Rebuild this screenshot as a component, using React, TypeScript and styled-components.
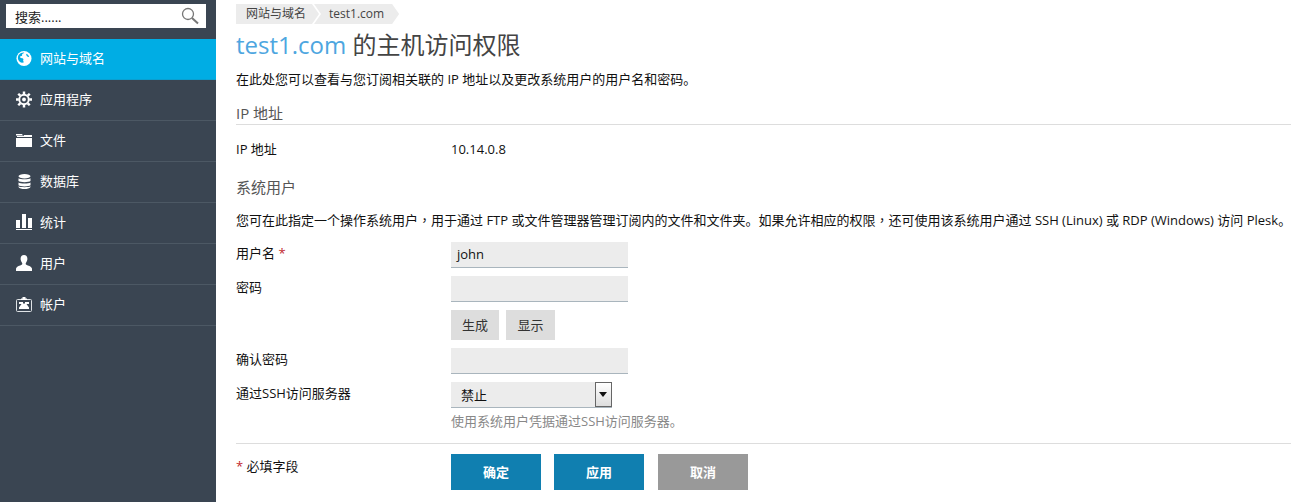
import React, { FC } from 'react';

import styled, { createGlobalStyle } from 'styled-components';

const GlobalStyle = createGlobalStyle`
  html, body {
    margin: 0;
    padding: 0;
    height: 100%;
    background: #fff;
  }
  body {
    font-family: "Open Sans", "Noto Sans CJK SC", sans-serif;
    font-size: 13px;
    color: #111;
    overflow: hidden;
  }
`;

const GlobeIcon: FC = () => (
  <svg width="17" height="17" viewBox="0 0 17 17">
    <circle cx="8.5" cy="8.5" r="8" fill="#fff" />
    <path d="M3 4.5c1.600-1.800 3.600-2.600 5.800-2.400-.5 1-1.600 1-2.200 1.700-.4.6.3 1.200-.3 1.800-.7.6-1.600.2-2 1-.3.7.5 1.200 1.200 1.400 1 .3 1.800.3 2.300 1.100.4.7-.4 1.300-.2 2 .2.6.9.8.8 1.500C5.600 13.800 3.200 12 2.300 9.500 1.800 7.700 2 6 3 4.500Z" fill="#00ade4" />
    <path d="M11 3.500c1.400.6 2.600 2 3 3.400-.9.2-1.700-.2-2.300-.8-.5-.6-1.200-1.600-.7-2.600Z" fill="#00ade4" />
  </svg>
);

const GearIcon: FC = () => (
  <svg width="17" height="17" viewBox="0 0 17 17">
    <circle cx="8.5" cy="8.500" r="5" fill="none" stroke="#fff" strokeWidth="2" />
    <circle cx="8.5" cy="8.500" r="2" fill="#fff" />
    <g stroke="#fff" strokeWidth="2.600">
      <path d="M8.500 0v3M8.500 14v3M0 8.500h3M14 8.500h3M2.400 2.400l2.100 2.100M12.500 12.500l2.100 2.100M14.600 2.400l-2.100 2.100M4.500 12.500l-2.100 2.100" />
    </g>
  </svg>
);

const FolderIcon: FC = () => (
  <svg width="16" height="14" viewBox="0 0 16 14">
    <path d="M0 1h6l1 1.500h-7ZM8 2h8v2H1V3h6.500Z" fill="#fff" />
    <path d="M0 5h16v9H0Z" fill="#fff" />
  </svg>
);

const DatabaseIcon: FC = () => (
  <svg width="13" height="15" viewBox="0 0 13 15">
    <ellipse cx="6.500" cy="2.200" rx="6" ry="2.200" fill="#fff" />
    <path d="M.5 4.200c1.500 1.300 10.500 1.300 12 0v2.800c-1.500 1.500-10.500 1.500-12 0ZM.5 8.500c1.500 1.300 10.500 1.300 12 0v2.800c-1.500 1.500-10.500 1.500-12 0ZM.5 12.300c1.500 1.200 10.500 1.200 12 0v.6c-1.500 2.800-10.500 2.800-12 0Z" fill="#fff" />
  </svg>
);

const ChartIcon: FC = () => (
  <svg width="16" height="16" viewBox="0 0 16 16">
    <path d="M0 6h4v8H0ZM6 0h4v14H6ZM12 4h4v10h-4ZM0 15h16v1H0Z" fill="#fff" />
  </svg>
);

const UserIcon: FC = () => (
  <svg width="16" height="16" viewBox="0 0 16 16">
    <path d="M8 0c2.200 0 3.400 1.700 3.400 3.800 0 1.700-.8 3.200-1.500 4.100-.4.700-.2 1.500.5 1.900 1.600.9 4.800 1.400 5.600 3.700V16H0v-2.500c.8-2.300 4-2.800 5.600-3.700.7-.4.900-1.200.5-1.900C5.400 7 4.600 5.500 4.600 3.800 4.600 1.700 5.800 0 8 0Z" fill="#fff" />
  </svg>
);

const AccountIcon: FC = () => (
  <svg width="16" height="15" viewBox="0 0 16 15">
    <path d="M1.500 2.500h13a1 1 0 0 1 1 1v10a1 1 0 0 1-1 1h-13a1 1 0 0 1-1-1v-10a1 1 0 0 1 1-1Z" fill="none" stroke="#dfe3e6" />
    <path d="M5 3V1.500h1.500V0h3v1.500H11V3Z" fill="#fff" />
    <path d="M3 5h10v7H3Z" fill="#fff" />
    <path d="M3 7h2.500L3 10.500ZM13 7h-2.500l2.500 3.500ZM7 5h2v1.500H7Z" fill="#3a4552" />
  </svg>
);

const SearchIcon: FC = () => (
  <svg width="18" height="18" viewBox="0 0 18 18">
    <circle cx="7" cy="7" r="5.500" fill="none" stroke="#777" strokeWidth="1.300" />
    <path d="M11 11l6 5.500" stroke="#777" strokeWidth="2" />
  </svg>
);

const menu = [
  { label: '网站与域名', icon: <GlobeIcon />, active: true },
  { label: '应用程序', icon: <GearIcon /> },
  { label: '文件', icon: <FolderIcon /> },
  { label: '数据库', icon: <DatabaseIcon /> },
  { label: '统计', icon: <ChartIcon /> },
  { label: '用户', icon: <UserIcon /> },
  { label: '帐户', icon: <AccountIcon /> },
];

const App: FC = () => (
  <Page>
    <GlobalStyle />
    <Sidebar>
      <SearchBox>
        <span>搜索......</span>
        <SearchIcon />
      </SearchBox>
      <Menu>
        {menu.map(({ label, icon, active }) => (
          <MenuItem key={label} $active={active}>
            <MenuIcon>{icon}</MenuIcon>
            <MenuLabel>{label}</MenuLabel>
          </MenuItem>
        ))}
      </Menu>
    </Sidebar>
    <Main>
      <Breadcrumbs>
        <Crumb $first>网站与域名</Crumb>
        <Crumb>test1.com</Crumb>
      </Breadcrumbs>
      <Title>
        <TitleLink>test1.com</TitleLink> 的主机访问权限
      </Title>
      <Intro>在此处您可以查看与您订阅相关联的 IP 地址以及更改系统用户的用户名和密码。</Intro>

      <SectionTitle>IP 地址</SectionTitle>
      <IpRow>
        <span>IP 地址</span>
        <span>10.14.0.8</span>
      </IpRow>

      <PlainSectionTitle>系统用户</PlainSectionTitle>
      <Description>
        您可在此指定一个操作系统用户<Comma>，</Comma>用于通过 FTP 或文件管理器管理订阅内的文件和文件夹。如果允许相应的权限<Comma>，</Comma>还可使用该系统用户通过 SSH (Linux) 或 RDP (Windows) 访问 Plesk。
      </Description>

      <FormRow>
        <Label>用户名 <Required>*</Required></Label>
        <Input>john</Input>
      </FormRow>
      <FormRow>
        <Label>密码</Label>
        <Input />
      </FormRow>
      <FormRow>
        <span />
        <SmallButtons>
          <SmallButton>生成</SmallButton>
          <SmallButton $wide>显示</SmallButton>
        </SmallButtons>
      </FormRow>
      <FormRow>
        <Label>确认密码</Label>
        <Input />
      </FormRow>
      <FormRow>
        <Label>通过SSH访问服务器</Label>
        <div>
          <Select>
            禁止
            <SelectArrow />
          </Select>
          <Hint>使用系统用户凭据通过SSH访问服务器。</Hint>
        </div>
      </FormRow>

      <Footer>
        <FooterLabel><Required>*</Required> 必填字段</FooterLabel>
        <Actions>
          <ActionButton>确定</ActionButton>
          <ActionButton>应用</ActionButton>
          <ActionButton $muted>取消</ActionButton>
        </Actions>
      </Footer>
    </Main>
  </Page>
);

const Page = styled.div`
  display: flex;
  width: 1291px;
  height: 502px;
`;

const Sidebar = styled.aside`
  flex: 0 0 216px;
  background: #3a4552;
  padding-top: 4px;
  box-sizing: border-box;
`;

const SearchBox = styled.div`
  display: flex;
  align-items: center;
  justify-content: space-between;
  box-sizing: border-box;
  width: 200px;
  height: 24px;
  margin-left: 6px;
  padding: 0 7px 0 9px;
  background: #fff;
  color: #222;
  font-size: 13px;
`;

const Menu = styled.nav`
  margin-top: 11px;
`;

const MenuItem = styled.div<{ $active?: boolean }>`
  display: flex;
  align-items: center;
  box-sizing: border-box;
  height: 41px;
  padding: 0 0 2px 16px;
  color: #fff;
  font-size: 13px;
  border-bottom: 1px solid ${({ $active }) => ($active ? '#0a9fd0' : '#4c5864')};
  background: ${({ $active }) => ($active ? '#00ade4' : 'transparent')};
`;

const MenuIcon = styled.span`
  display: flex;
  align-items: center;
  justify-content: center;
  width: 16px;
  margin-right: 8px;
`;

const MenuLabel = styled.span`
  padding-bottom: 2px;
`;

const Main = styled.main`
  flex: 1;
  min-width: 0;
  padding: 4px 0 0 20px;
  box-sizing: border-box;
`;

const Breadcrumbs = styled.div`
  display: flex;
  height: 20px;
`;

const Crumb = styled.div<{ $first?: boolean }>`
  height: 20px;
  line-height: 20px;
  padding: ${({ $first }) => ($first ? '0 13px 0 10px' : '0 15px')};
  margin-left: ${({ $first }) => ($first ? '0' : '-5px')};
  background: #ececec;
  color: #444;
  font-size: 12px;
  clip-path: polygon(0 0, calc(100% - 7px) 0, 100% 50%, calc(100% - 7px) 100%, 0 100%${({ $first }) => ($first ? '' : ', 7px 50%')});
`;

const Title = styled.h1`
  margin: 4px 0 0;
  height: 33px;
  line-height: 33px;
  font-size: 24px;
  font-weight: 400;
  color: #444;
`;

const TitleLink = styled.span`
  color: #4da6e0;
`;

const Intro = styled.p`
  margin: 9px 0 0;
  line-height: 18px;
`;

const SectionTitle = styled.h2`
  margin: 16px 0 0;
  padding-bottom: 2px;
  line-height: 18px;
  font-size: 15px;
  font-weight: 400;
  color: #555;
  border-bottom: 1px solid #ddd;
`;

const PlainSectionTitle = styled(SectionTitle)`
  margin-top: 20px;
  padding-bottom: 0;
  border-bottom: none;
`;

const IpRow = styled.div`
  display: grid;
  grid-template-columns: 215px 1fr;
  margin-top: 15px;
  line-height: 18px;
`;

const Label = styled.div`
  padding-top: 2px;
  line-height: 18px;
`;

const FooterLabel = styled(Label)`
  padding-top: 3px;
`;

const Description = styled.p`
  margin: 15px 0 13px;
  line-height: 18px;
  white-space: nowrap;
`;

// the reference sets this mark centred in its cell, as the TC face does
const Comma = styled.span`
  font-family: "Noto Sans CJK TC", sans-serif;
`;

const FormRow = styled.div`
  display: grid;
  grid-template-columns: 215px 1fr;
  margin-top: 8px;
`;

const Required = styled.span`
  color: #c1272d;
`;

const Input = styled.div`
  box-sizing: border-box;
  width: 177px;
  height: 26px;
  padding: 0 6px;
  line-height: 25px;
  background: #ececec;
  border-bottom: 1px solid #a9b5bd;
`;

const SmallButtons = styled.div`
  display: flex;
  gap: 7px;
`;

const SmallButton = styled.div<{ $wide?: boolean }>`
  width: ${({ $wide }) => ($wide ? '49px' : '48px')};
  height: 30px;
  line-height: 30px;
  text-align: center;
  background: #ddd;
  color: #333;
`;

const Select = styled.div`
  position: relative;
  box-sizing: border-box;
  width: 161px;
  height: 26px;
  padding-left: 10px;
  line-height: 26px;
  background: #ececec;
  border-bottom: 1px solid #a9b5bd;
`;

const SelectArrow = styled.span`
  position: absolute;
  top: 0;
  right: 0;
  box-sizing: border-box;
  width: 17px;
  height: 25px;
  border: 1px solid #666;
  background: linear-gradient(#fff, #ddd);

  &::after {
    content: '';
    position: absolute;
    left: 3px;
    top: 9px;
    border: 4px solid transparent;
    border-top: 5px solid #111;
    border-bottom: none;
  }
`;

const Hint = styled.div`
  margin-top: 4px;
  line-height: 18px;
  color: #888;
`;

const Footer = styled.div`
  display: grid;
  grid-template-columns: 215px 1fr;
  margin-top: 13px;
  padding-top: 10px;
  border-top: 1px solid #ddd;
`;

const Actions = styled.div`
  display: flex;
  gap: 13px;
`;

const ActionButton = styled.div<{ $muted?: boolean }>`
  width: 90px;
  height: 36px;
  line-height: 36px;
  text-align: center;
  color: #fff;
  font-weight: 700;
  background: ${({ $muted }) => ($muted ? '#999' : '#107fb0')};

  &:last-child {
    margin-left: 1px;
  }
`;

export default App;
